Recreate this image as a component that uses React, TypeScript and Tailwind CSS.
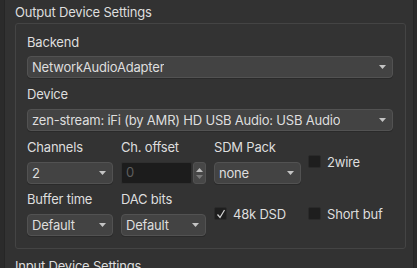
import React from 'react';

const font = { fontFamily: 'Inter, "Noto Sans", sans-serif' };

function Arrow() {
  return (
    <svg width="7" height="4" viewBox="0 0 7 4" className="shrink-0">
      <path d="M0 0 L7 0 L3.5 4 Z" fill="#c4c4c4" />
    </svg>
  );
}

function Combo({ value, className = '' }: { value: string; className?: string }) {
  return (
    <div
      className={
        'h-[22px] flex items-center justify-between pl-[4px] pr-[6px] rounded-[4px] border border-[#525252] bg-[#434343] shadow-[0_1px_0_#2a2a2a] ' +
        className
      }
    >
      <span className="truncate leading-[16px]">{value}</span>
      <Arrow />
    </div>
  );
}

function Label({ children }: { children: React.ReactNode }) {
  return <div className="h-[16px] leading-[16px]">{children}</div>;
}

function Check({ label, checked = false }: { label: string; checked?: boolean }) {
  return (
    <div className="flex items-center gap-[6px]">
      <div className="w-[13px] h-[13px] rounded-[2px] bg-[#1e1e1e] border border-[#2a2a2a] flex items-center justify-center">
        {checked && (
          <svg width="10" height="10" viewBox="0 0 10 10">
            <path d="M1.5 5.5 L4 8.5 L8.5 1" stroke="#d6d6d6" strokeWidth="1.2" fill="none" />
          </svg>
        )}
      </div>
      <span className="leading-[16px]">{label}</span>
    </div>
  );
}

function SpinBox() {
  return (
    <div className="h-[22px] flex items-stretch gap-[1px]">
      <div className="flex-1 flex items-center pl-[4px] bg-[#1c1c1c] border border-[#2f2f2f] rounded-[2px] text-[#5e5e5e]">
        0
      </div>
      <div className="w-[13px] rounded-[3px] bg-[#474747] border border-[#525252] flex flex-col items-center justify-center gap-[3px]">
        <svg width="7" height="4" viewBox="0 0 7 4">
          <path d="M0 4 L7 4 L3.5 0 Z" fill="#bdbdbd" />
        </svg>
        <svg width="7" height="4" viewBox="0 0 7 4">
          <path d="M0 0 L7 0 L3.5 4 Z" fill="#7a7a7a" />
        </svg>
      </div>
    </div>
  );
}

export default function App() {
  return (
    <div
      className="w-[417px] h-[268px] overflow-hidden bg-[#2b2b2b] text-[13px] tracking-[-0.2px] text-[#dedede] pl-[4px] pr-[3px]"
      style={font}
    >
      <div className="h-full bg-[#323232] border-l border-r border-[#262626] pl-[10px]">
        <div className="pt-[4px] h-[23px] leading-[16px]">Output Device Settings</div>
        <div className="w-[391px] h-[226px] border border-[#444444] rounded-[3px] bg-[#333333] pl-[11px] pr-[12px] pt-[10px]">
          <Label>Backend</Label>
          <Combo value="NetworkAudioAdapter" className="mt-[6px]" />
          <div className="mt-[8px]">
            <Label>Device</Label>
          </div>
          <Combo value="zen-stream: iFi (by AMR) HD USB Audio: USB Audio" className="mt-[7px]" />

          <div className="mt-[8px] flex">
            <div className="w-[86px]">
              <Label>Channels</Label>
              <Combo value="2" className="mt-[7px]" />
            </div>
            <div className="w-[85px] ml-[8px]">
              <Label>Ch. offset</Label>
              <div className="mt-[7px]">
                <SpinBox />
              </div>
            </div>
            <div className="w-[87px] ml-[8px]">
              <Label>SDM Pack</Label>
              <Combo value="none" className="mt-[7px]" />
            </div>
            <div className="ml-[7px] flex items-center">
              <Check label="2wire" />
            </div>
          </div>

          <div className="mt-[7px] flex">
            <div className="w-[86px]">
              <Label>Buffer time</Label>
              <Combo value="Default" className="mt-[7px]" />
            </div>
            <div className="w-[85px] ml-[8px]">
              <Label>DAC bits</Label>
              <Combo value="Default" className="mt-[7px]" />
            </div>
            <div className="w-[87px] ml-[8px] flex items-center">
              <Check label="48k DSD" checked />
            </div>
            <div className="ml-[7px] flex items-center">
              <Check label="Short buf" />
            </div>
          </div>
        </div>
        <div className="pt-[9px] leading-[16px]">Input Device Settings</div>
      </div>
    </div>
  );
}
